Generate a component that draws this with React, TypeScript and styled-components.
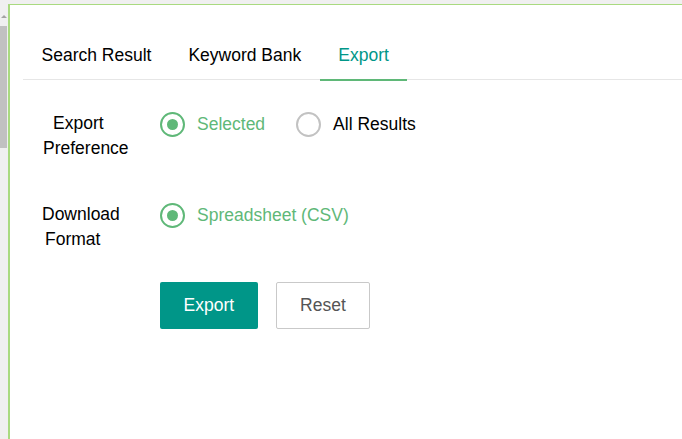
import React, { useState } from "react";
import styled, { createGlobalStyle } from "styled-components";

const GlobalStyle = createGlobalStyle`
  html, body { margin: 0; padding: 0; background: #f0f0f0; }
  body { font-family: "Liberation Sans", Arial, sans-serif; }
  * { box-sizing: border-box; }
`;

const GREEN = "#5fb878";
const TEAL = "#009688";

const Page = styled.div`
  width: 682px;
  height: 439px;
  display: flex;
  flex-direction: column;
  background: #f0f0f0;
  overflow: hidden;
`;

const TopBand = styled.div`
  height: 4px;
  flex: none;
  background: #f0f0f0;
`;

const Body = styled.div`
  flex: 1;
  display: flex;
`;

const ScrollStrip = styled.div`
  width: 8px;
  flex: none;
  display: flex;
  flex-direction: column;
  background: #f0f0f0;
`;

const ScrollArrow = styled.div`
  margin: 11px 0 0 1px;
  width: 0;
  height: 0;
  border-left: 3px solid transparent;
  border-right: 3px solid transparent;
  border-bottom: 3px solid #a3a3a3;
`;

const ScrollThumb = styled.div`
  margin-top: 8px;
  width: 7px;
  height: 122px;
  background: #c1c1c1;
`;

const Panel = styled.div`
  flex: 1;
  background: #fff;
  border-top: 1px solid #a9da80;
  border-left: 2px solid #a9da80;
  padding: 25px 0 0 13px;
  font-size: 17.5px;
  color: #000;
`;

const TabList = styled.div`
  display: flex;
  height: 50px;
  border-bottom: 1px solid #e6e6e6;
`;

const Tab = styled.div<{ $active?: boolean }>`
  height: 51px;
  line-height: 51px;
  padding: 0 18.5px;
  cursor: pointer;
  color: ${(p) => (p.$active ? TEAL : "#000")};
  border-bottom: 2px solid ${(p) => (p.$active ? GREEN : "transparent")};
  white-space: nowrap;
`;

const Form = styled.div`
  display: flex;
  flex-direction: column;
  padding: 31px 0 0 19px;
`;

const Row = styled.div`
  display: flex;
  align-items: flex-start;
  margin-bottom: 41px;
`;

const Label = styled.div`
  width: 118px;
  flex: none;
  line-height: 25px;
`;

const LabelLine = styled.div<{ $indent: number }>`
  padding-left: ${(p) => p.$indent}px;
  white-space: nowrap;
`;

const RadioGroup = styled.div`
  display: flex;
  align-items: center;
  gap: 31px;
  margin-top: 1px;
`;

const RadioOption = styled.label<{ $checked?: boolean }>`
  display: flex;
  align-items: center;
  gap: 12px;
  height: 25px;
  cursor: pointer;
  color: ${(p) => (p.$checked ? GREEN : "#000")};
`;

const RadioCircle = styled.span<{ $checked?: boolean }>`
  width: 25px;
  height: 25px;
  border-radius: 50%;
  border: 2px solid ${(p) => (p.$checked ? GREEN : "#c2c2c2")};
  display: flex;
  align-items: center;
  justify-content: center;
  &::after {
    content: "";
    width: 11px;
    height: 11px;
    border-radius: 50%;
    background: ${(p) => (p.$checked ? GREEN : "transparent")};
  }
`;

const Actions = styled.div`
  display: flex;
  gap: 18px;
  padding-left: 118px;
  margin-top: -11px;
`;

const Button = styled.button<{ $primary?: boolean }>`
  height: 47px;
  padding: 0 ${(p) => (p.$primary ? 23.5 : 23.5)}px;
  border-radius: 2px;
  font-family: "Liberation Sans", Arial, sans-serif;
  font-size: 17.5px;
  cursor: pointer;
  background: ${(p) => (p.$primary ? TEAL : "#fff")};
  color: ${(p) => (p.$primary ? "#fff" : "#555")};
  border: ${(p) => (p.$primary ? "none" : "1px solid #c9c9c9")};
`;

export default function App() {
  const [pref, setPref] = useState("selected");
  return (
    <Page>
      <GlobalStyle />
      <TopBand />
      <Body>
        <ScrollStrip>
          <ScrollArrow />
          <ScrollThumb />
        </ScrollStrip>
        <Panel>
          <TabList>
            <Tab>Search Result</Tab>
            <Tab>Keyword Bank</Tab>
            <Tab $active>Export</Tab>
          </TabList>
          <Form>
            <Row>
              <Label>
                <LabelLine $indent={11}>Export</LabelLine>
                <LabelLine $indent={1}>Preference</LabelLine>
              </Label>
              <RadioGroup>
                <RadioOption $checked={pref === "selected"} onClick={() => setPref("selected")}>
                  <RadioCircle $checked={pref === "selected"} />
                  Selected
                </RadioOption>
                <RadioOption $checked={pref === "all"} onClick={() => setPref("all")}>
                  <RadioCircle $checked={pref === "all"} />
                  All Results
                </RadioOption>
              </RadioGroup>
            </Row>
            <Row>
              <Label>
                <LabelLine $indent={0}>Download</LabelLine>
                <LabelLine $indent={3}>Format</LabelLine>
              </Label>
              <RadioGroup>
                <RadioOption $checked>
                  <RadioCircle $checked />
                  Spreadsheet (CSV)
                </RadioOption>
              </RadioGroup>
            </Row>
            <Actions>
              <Button $primary>Export</Button>
              <Button>Reset</Button>
            </Actions>
          </Form>
        </Panel>
      </Body>
    </Page>
  );
}
